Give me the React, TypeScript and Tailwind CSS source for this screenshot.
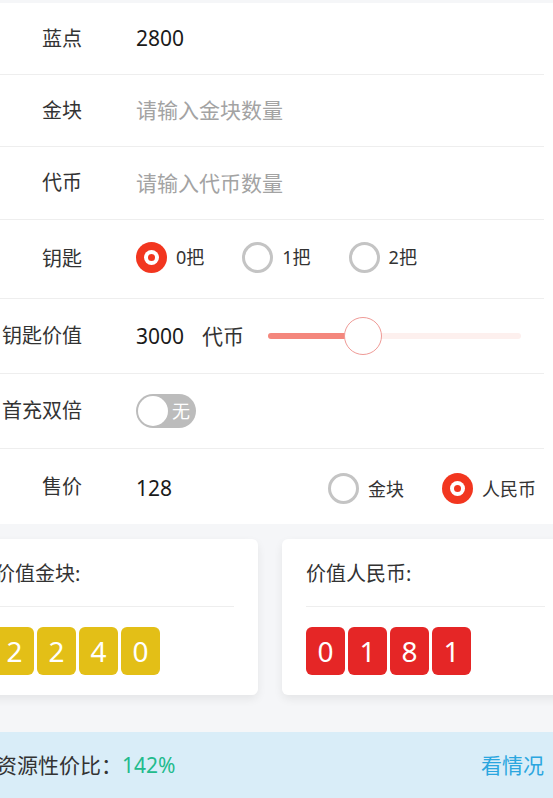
import { useState } from 'react'

const FONT = { fontFamily: '"Noto Sans", "Noto Sans CJK SC", sans-serif' }

function Radio({ checked, label, onClick }: { checked: boolean; label: string; onClick?: () => void }) {
  return (
    <button type="button" onClick={onClick} className="flex items-center gap-[9px]">
      {checked ? (
        <span className="flex h-[31px] w-[31px] items-center justify-center rounded-full bg-[#f2361f]">
          <span className="flex h-[15px] w-[15px] items-center justify-center rounded-full bg-white">
            <span className="h-[7px] w-[7px] rounded-full bg-[#f2361f]" />
          </span>
        </span>
      ) : (
        <span className="h-[31px] w-[31px] rounded-full border-[3px] border-[#c4c4c4] bg-white" />
      )}
      <span className="text-[18px] leading-none text-[#333]">{label}</span>
    </button>
  )
}

function Row({ label, height, children, last }: { label: string; height: string; children: React.ReactNode; last?: boolean }) {
  return (
    <div className={`mr-[9px] flex items-center ${height} ${last ? '' : 'border-b border-[#eeeeee]'}`}>
      <div className="w-[82px] shrink-0 text-right text-[20px] leading-none text-[#333]">{label}</div>
      <div className="ml-[54px] flex flex-1 items-center">{children}</div>
    </div>
  )
}

function DigitBox({ digits, color }: { digits: string; color: string }) {
  return (
    <div className="mt-[20px] flex gap-[3px]">
      {digits.split('').map((d, i) => (
        <div
          key={i}
          className={`flex h-[48px] w-[39px] items-center justify-center rounded-[6px] text-[28px] leading-none text-white ${color}`}
        >
          {d}
        </div>
      ))}
    </div>
  )
}

function ValueCard({ title, digits, color }: { title: string; digits: string; color: string }) {
  return (
    <div className="w-[287px] shrink-0 rounded-[6px] bg-white px-6 pb-[20px] shadow-[0_4px_10px_rgba(0,0,0,0.07)]">
      <div className="border-b border-[#eeeeee] pt-[22px] pb-[19px] text-[20px] leading-[26px] text-[#333]">{title}</div>
      <DigitBox digits={digits} color={color} />
    </div>
  )
}

export default function App() {
  const [keys, setKeys] = useState(0)
  const [currency, setCurrency] = useState<'gold' | 'rmb'>('rmb')

  return (
    <div className="min-h-[798px] w-full overflow-hidden bg-[#f5f6f8]" style={FONT}>
      <div className="h-[3px]" />
      <div className="bg-white">
        <Row label="蓝点" height="h-[72px]">
          <span className="text-[21px] leading-none text-[#1a1a1a]">2800</span>
        </Row>
        <Row label="金块" height="h-[72px]">
          <span className="text-[21px] leading-none text-[#a3a3a3]">请输入金块数量</span>
        </Row>
        <Row label="代币" height="h-[73px]">
          <span className="text-[21px] leading-none text-[#a3a3a3]">请输入代币数量</span>
        </Row>
        <Row label="钥匙" height="h-[79px]">
          <div className="-mt-[4px] flex items-center gap-[38px]">
            {['0把', '1把', '2把'].map((l, i) => (
              <Radio key={l} label={l} checked={keys === i} onClick={() => setKeys(i)} />
            ))}
          </div>
        </Row>
        <Row label="钥匙价值" height="h-[75px]">
          <span className="text-[21px] leading-none text-[#1a1a1a]">3000</span>
          <span className="ml-[18px] text-[21px] leading-none text-[#333]">代币</span>
          <div className="relative ml-[24px] mr-[23px] flex h-[38px] flex-1 items-center">
            <div className="h-[6px] w-full rounded-full bg-[#fdf0ee]" />
            <div className="absolute left-0 h-[6px] w-[95px] rounded-l-full bg-[#f4877d]" />
            <div className="absolute left-[76px] h-[38px] w-[38px] rounded-full border border-[#ef9a96] bg-white" />
          </div>
        </Row>
        <Row label="首充双倍" height="h-[75px]">
          <div className="flex h-[34px] w-[60px] items-center rounded-full bg-[#bcbcbc] px-[2px]">
            <span className="h-[30px] w-[30px] rounded-full bg-white" />
            <span className="ml-[4px] text-[18px] leading-none text-white">无</span>
          </div>
        </Row>
        <Row label="售价" height="h-[75px]" last>
          <span className="mt-[4px] text-[21px] leading-none text-[#1a1a1a]">128</span>
          <div className="ml-auto mr-[8px] mt-[4px] flex items-center gap-[38px]">
            <Radio label="金块" checked={currency === 'gold'} onClick={() => setCurrency('gold')} />
            <Radio label="人民币" checked={currency === 'rmb'} onClick={() => setCurrency('rmb')} />
          </div>
        </Row>
      </div>

      <div className="-ml-[29px] mt-[15px] flex gap-6">
        <ValueCard title="价值金块:" digits="2240" color="bg-[#e3bf17]" />
        <ValueCard title="价值人民币:" digits="0181" color="bg-[#e52626]" />
      </div>

      <div className="mt-[37px] flex h-[67px] items-center justify-between bg-[#d9edf8] pr-[9px]">
        <div className="-ml-[4px] text-[21px] leading-none text-[#333]">
          资源性价比：<span className="text-[#22bb8c]">142%</span>
        </div>
        <span className="text-[21px] leading-none text-[#2ba6df]">看情况</span>
      </div>
    </div>
  )
}
